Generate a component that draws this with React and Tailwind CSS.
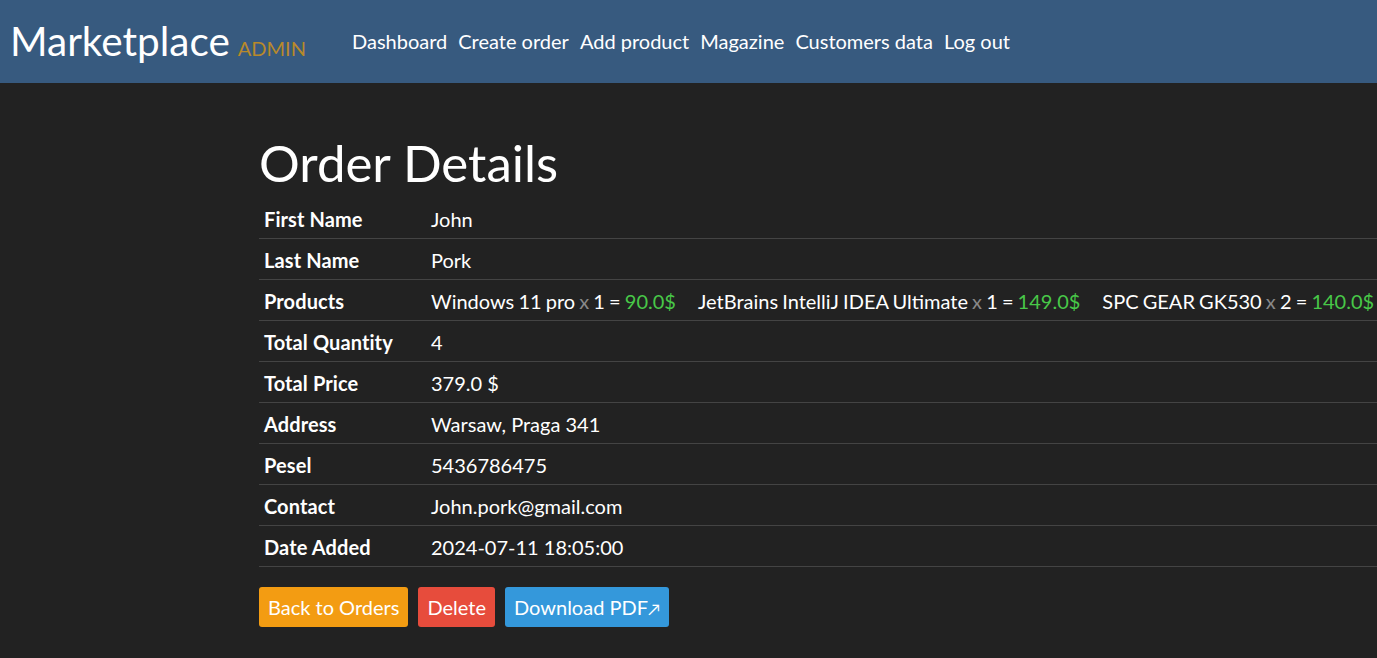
import React from 'react';

const links = ['Dashboard', 'Create order', 'Add product', 'Magazine', 'Customers data', 'Log out'];

const products = [
  { name: 'Windows 11 pro', qty: 1, price: '90.0$' },
  { name: 'JetBrains IntelliJ IDEA Ultimate', qty: 1, price: '149.0$' },
  { name: 'SPC GEAR GK530', qty: 2, price: '140.0$' },
];

function Row({ label, children }) {
  return (
    <tr className="border-b border-[#444]">
      <th className="text-left font-bold px-[5px] pt-[9px] pb-[7px] w-[172px] align-top tracking-[0.1px]">{label}</th>
      <td className="px-0 pt-[9px] pb-[7px]">{children}</td>
    </tr>
  );
}

export default function App() {
  return (
    <div className="min-h-screen bg-[#222] text-white overflow-x-hidden" style={{ fontFamily: 'Lato, "Noto Sans", sans-serif' }}>
      {/* navbar */}
      <nav className="h-[83px] bg-[#375a7f] flex items-center px-[10px]">
        <a className="text-[40.5px] leading-none mr-[46px] flex items-baseline gap-[8px]">
          Marketplace
          <span className="text-[20px] text-[#b8892b] font-normal">ADMIN</span>
        </a>
        <div className="flex gap-[11px] text-[20px] -mt-[1px]">
          {links.map((l) => (
            <a key={l} className="text-white">{l}</a>
          ))}
        </div>
      </nav>

      <main className="pl-[259px] pt-[50px]">
        <h1 className="text-[51px] leading-[60px] mb-[5px]">Order Details</h1>

        <table className="w-max min-w-[1118px] text-[20px] leading-[24px] whitespace-nowrap border-collapse">
          <tbody>
            <Row label="First Name">John</Row>
            <Row label="Last Name">Pork</Row>
            <Row label="Products">
              <div className="flex gap-[22px] [word-spacing:-1px]">
                {products.map((p) => (
                  <span key={p.name}>
                    {p.name} <span className="text-[#888]">x</span> {p.qty} = <span className="text-[#48c848]">{p.price}</span>
                  </span>
                ))}
              </div>
            </Row>
            <Row label="Total Quantity">4</Row>
            <Row label="Total Price">379.0 $</Row>
            <Row label="Address">Warsaw, Praga 341</Row>
            <Row label="Pesel">5436786475</Row>
            <Row label="Contact">John.pork@gmail.com</Row>
            <Row label="Date Added">2024-07-11 18:05:00</Row>
          </tbody>
        </table>

        <div className="flex gap-[10px] mt-[20px] text-[20px]">
          <button className="bg-[#f39c12] text-white px-[9px] h-[40px] rounded-[3px]">Back to Orders</button>
          <button className="bg-[#e74c3c] text-white px-[9px] h-[40px] rounded-[3px]">Delete</button>
          <button className="bg-[#3498db] text-white px-[9px] h-[40px] rounded-[3px]">Download PDF<span className="text-[16px]">↗</span></button>
        </div>
      </main>
    </div>
  );
}
